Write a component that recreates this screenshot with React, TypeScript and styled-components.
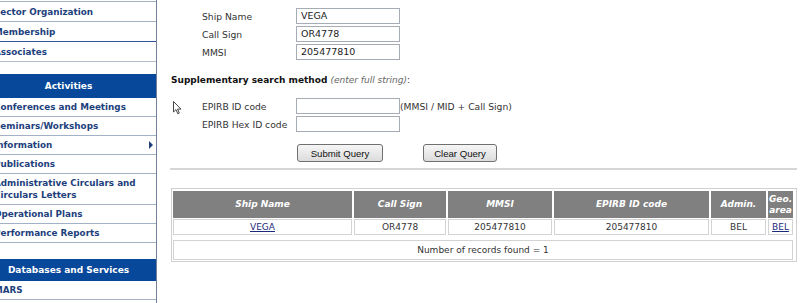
import React from 'react';
import styled, { createGlobalStyle } from 'styled-components';

const GlobalStyle = createGlobalStyle`
  html, body {
    margin: 0;
    padding: 0;
    background: #ffffff;
  }
  body {
    font-family: "DejaVu Sans", Verdana, sans-serif;
    color: #333;
  }
`;

const Page = styled.div`
  display: flex;
  width: 800px;
  height: 303px;
  overflow: hidden;
`;

const SideWrap = styled.div`
  width: 156px;
  flex-shrink: 0;
  overflow: hidden;
  border-right: 1px solid #6f819d;
  height: 303px;
`;

const SideNav = styled.nav`
  margin-left: -19px;
  width: 175px;
  padding-top: 1px;
  border-top: 0;
`;

const NavItem = styled.div<{ $h?: number; $line?: string; $top?: boolean }>`
  display: flex;
  align-items: center;
  justify-content: space-between;
  height: ${p => p.$h || 18}px;
  padding: 0 3px 0 13px;
  border-bottom: 1px solid ${p => p.$line || '#a3b1c6'};
  border-top: ${p => (p.$top ? '1px solid #a3b1c6' : '0')};
  font-size: 8.8px;
  font-weight: bold;
  line-height: 12px;
  color: #1d3f7c;
  background: #fff;
`;

const Spacer = styled.div<{ $h: number }>`
  height: ${p => p.$h}px;
`;

const NavHeader = styled.div<{ $h: number }>`
  height: ${p => p.$h}px;
  display: flex;
  align-items: center;
  justify-content: center;
  background: #07489a;
  color: #fff;
  font-size: 9px;
  font-weight: bold;
`;

const Arrow = styled.span`
  width: 0;
  height: 0;
  border-top: 4px solid transparent;
  border-bottom: 4px solid transparent;
  border-left: 4px solid #1d3f7c;
`;

const Main = styled.main`
  flex: 1;
  position: relative;
  padding: 8px 3px 0 14px;
  font-size: 9.2px;
`;

const FormGrid = styled.div`
  display: grid;
  grid-template-columns: 94px auto;
  row-gap: 2px;
  margin-left: 31px;
  align-items: center;
`;

const Label = styled.span`
  color: #333;
`;

const InputRow = styled.div`
  display: flex;
  align-items: center;
  white-space: nowrap;
`;

const TextBox = styled.div`
  box-sizing: border-box;
  width: 104px;
  height: 16px;
  border: 1px solid #a5acb5;
  background: #fff;
  padding: 0 4px;
  font-size: 9.5px;
  line-height: 14px;
  color: #222;
`;

const Hint = styled.span`
  color: #333;
`;

const SectionTitle = styled.div`
  margin-top: 14px;
  margin-bottom: 12px;
  font-size: 9px;
  line-height: 12px;
  font-weight: bold;
  color: #111;

  em {
    font-weight: normal;
    color: #666;
  }
  span {
    font-weight: normal;
    color: #333;
  }
`;

const Buttons = styled.div`
  display: flex;
  gap: 40px;
  margin: 12px 0 0 126px;
`;

const Button = styled.button<{ $w: number }>`
  box-sizing: border-box;
  width: ${p => p.$w}px;
  height: 18px;
  padding: 0;
  border: 1px solid #707070;
  border-radius: 3px;
  background: linear-gradient(#f6f6f6, #dcdcdc);
  font-family: "Liberation Sans", Arial, sans-serif;
  font-size: 9.6px;
  color: #111;
`;

const Divider = styled.hr`
  margin: 6px 0 0 -1px;
  border: 0;
  height: 2px;
  background: #d6d6d6;
`;

const ResultBox = styled.div`
  box-sizing: border-box;
  width: 626px;
  margin-top: 18px;
  border: 1px solid #d0d0d0;
  padding: 2px 3px 1px 1px;
  display: grid;
  grid-template-columns: 179px 92px 104px 155px 55px 25px;
  column-gap: 2px;
  row-gap: 1px;
  font-size: 9px;
`;

const Th = styled.div`
  background: #808080;
  color: #fff;
  font-weight: bold;
  font-style: italic;
  text-align: center;
  display: flex;
  align-items: center;
  justify-content: center;
  height: 27px;
  line-height: 11px;
`;

const Td = styled.div`
  box-sizing: border-box;
  height: 16px;
  border: 1px solid #d3d3d3;
  text-align: center;
  line-height: 14px;
  color: #333;
  white-space: nowrap;
`;

const Link = styled.a`
  color: #1b2a7a;
  text-decoration: underline;
`;

const Footer = styled.div`
  grid-column: 1 / -1;
  box-sizing: border-box;
  height: 20px;
  margin-top: 4px;
  border: 1px solid #d3d3d3;
  text-align: center;
  line-height: 18px;
  color: #333;
`;

const Cursor = styled.svg`
  position: absolute;
  left: 16px;
  top: 101px;
`;

const navTop = ['Sector Organization', 'Membership', 'Associates'];
const activities = [
  { label: 'Conferences and Meetings' },
  { label: 'Seminars/Workshops' },
  { label: 'Information', arrow: true },
  { label: 'Publications' },
  { label: 'Administrative Circulars and Circulars Letters', h: 30 },
  { label: 'Operational Plans' },
  { label: 'Performance Reports' },
];

const App = () => {
  return (
    <Page>
      <GlobalStyle />
      <SideWrap>
        <SideNav>
          {navTop.map((t, i) => (
            <NavItem key={t} $h={19} $top={i === 0} $line={i === 1 ? '#2f5597' : i === 2 ? '#b3bcc9' : undefined}>
              {t}
            </NavItem>
          ))}
          <Spacer $h={12} />
          <NavHeader $h={24}>Activities</NavHeader>
          {activities.map(a => (
            <NavItem key={a.label} $h={a.h}>
              <span>{a.label}</span>
              {a.arrow && <Arrow />}
            </NavItem>
          ))}
          <Spacer $h={16} />
          <NavHeader $h={22}>Databases and Services</NavHeader>
          <NavItem>MARS</NavItem>
        </SideNav>
      </SideWrap>

      <Main>
        <FormGrid>
          <Label>Ship Name</Label>
          <TextBox>VEGA</TextBox>
          <Label>Call Sign</Label>
          <TextBox>OR4778</TextBox>
          <Label>MMSI</Label>
          <TextBox>205477810</TextBox>
        </FormGrid>

        <SectionTitle>
          Supplementary search method <em>(enter full string)</em><span>:</span>
        </SectionTitle>

        <FormGrid>
          <Label>EPIRB ID code</Label>
          <InputRow>
            <TextBox />
            <Hint>(MMSI / MID + Call Sign)</Hint>
          </InputRow>
          <Label>EPIRB Hex ID code</Label>
          <TextBox />
        </FormGrid>

        <Buttons>
          <Button $w={86}>Submit Query</Button>
          <Button $w={74}>Clear Query</Button>
        </Buttons>

        <Divider />

        <ResultBox>
          <Th>Ship Name</Th>
          <Th>Call Sign</Th>
          <Th>MMSI</Th>
          <Th>EPIRB ID code</Th>
          <Th>Admin.</Th>
          <Th>Geo.<br />area</Th>
          <Td><Link>VEGA</Link></Td>
          <Td>OR4778</Td>
          <Td>205477810</Td>
          <Td>205477810</Td>
          <Td>BEL</Td>
          <Td><Link>BEL</Link></Td>
          <Footer>Number of records found = 1</Footer>
        </ResultBox>

        <Cursor width="9" height="14" viewBox="0 0 9 14">
          <path d="M0.5 0.5 L0.5 11 L3 8.6 L4.8 12.8 L6.3 12.1 L4.6 8.1 L8 8.1 Z" fill="#fff" stroke="#333" strokeWidth="0.9" strokeLinejoin="round" />
        </Cursor>
      </Main>
    </Page>
  );
};

export default App;
